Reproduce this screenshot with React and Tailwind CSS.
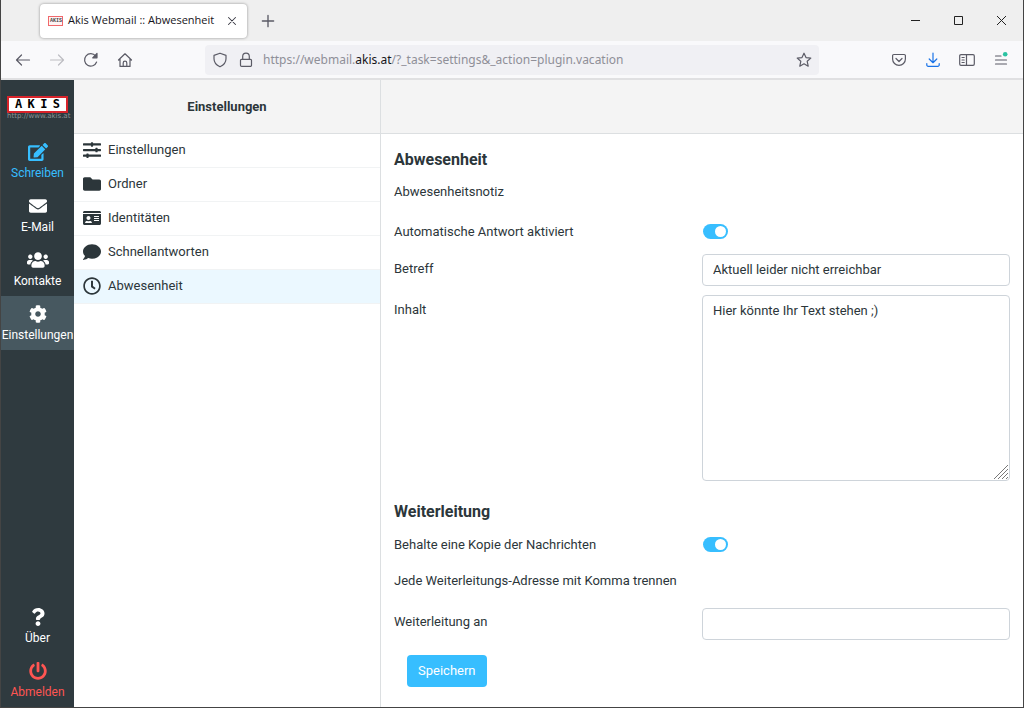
/**
 * Webmail settings page - out-of-office notice and forwarding,
 * shown inside a browser window frame
 */

import React, { useState } from 'react';
import {
  FaEdit,
  FaEnvelope,
  FaUsers,
  FaCog,
  FaQuestion,
  FaPowerOff,
  FaSlidersH,
  FaFolder,
  FaIdCard,
  FaComment,
  FaRegClock,
} from 'react-icons/fa';

const mainTasks = [
  { label: 'Schreiben', icon: FaEdit, size: 20, color: 'text-[#37beff]' },
  { label: 'E-Mail', icon: FaEnvelope, size: 18, color: 'text-white' },
  { label: 'Kontakte', icon: FaUsers, size: 22, color: 'text-white' },
  { label: 'Einstellungen', icon: FaCog, size: 18, color: 'text-white bg-[#475860]' },
];

const footerTasks = [
  { label: 'Über', icon: FaQuestion, size: 18, color: 'text-white' },
  { label: 'Abmelden', icon: FaPowerOff, size: 18, color: 'text-[#ff5552]' },
];

const sections = [
  { label: 'Einstellungen', icon: FaSlidersH },
  { label: 'Ordner', icon: FaFolder },
  { label: 'Identitäten', icon: FaIdCard },
  { label: 'Schnellantworten', icon: FaComment },
  { label: 'Abwesenheit', icon: FaRegClock },
];

// Stroke icon used for all browser buttons
const Glyph = ({ children, size = 16, width = 1.2 }) => (
  <svg
    width={size}
    height={size}
    viewBox="0 0 16 16"
    fill="none"
    stroke="currentColor"
    strokeWidth={width}
    strokeLinecap="round"
    strokeLinejoin="round"
    className="shrink-0"
    aria-hidden="true"
  >
    {children}
  </svg>
);

const ToolButton = ({ label, color = 'text-[#5b5b66]', children }) => (
  <button type="button" aria-label={label} className={`flex h-8 w-[34px] items-center justify-center ${color}`}>
    <Glyph>{children}</Glyph>
  </button>
);

const CaptionButton = ({ label, children }) => (
  <button type="button" aria-label={label} className="flex h-full w-[43px] items-center justify-center text-[#222222]">
    <svg width="11" height="11" viewBox="0 0 11 11" fill="none" stroke="currentColor" aria-hidden="true">
      {children}
    </svg>
  </button>
);

const TabBar = () => (
  <div className="flex h-[41px] items-center bg-[#efefef] pl-[39px]">
    <div className="flex h-[34px] w-[207px] items-center rounded bg-white px-2 shadow-[0_0_3px_rgba(0,0,0,0.4)]">
      <span className="flex w-[15px] shrink-0 justify-between border border-[#f0686c] bg-[#fff4f4] px-px font-['Liberation_Mono',monospace] text-[5px] leading-[8px] font-bold text-[#444444]">
        <span>A</span>
        <span>K</span>
        <span>I</span>
        <span>S</span>
      </span>
      <span className="ml-[5px] flex-1 font-['Open_Sans','Noto_Sans',sans-serif] text-[11px] whitespace-nowrap text-[#15141a]">
        Akis Webmail :: Abwesenheit
      </span>
      <button type="button" aria-label="Tab schließen" className="text-[#3a3a44]">
        <Glyph size={14}>
          <path d="M4 4l8 8M12 4l-8 8" />
        </Glyph>
      </button>
    </div>
    <button type="button" aria-label="Neuer Tab" className="ml-3 text-[#5b5b66]">
      <Glyph size={18}>
        <path d="M8 3v10M3 8h10" />
      </Glyph>
    </button>
    <div className="ml-auto flex h-full">
      <CaptionButton label="Minimieren">
        <path d="M1 5.5h9" />
      </CaptionButton>
      <CaptionButton label="Maximieren">
        <path d="M1.5 1.5h8v8h-8z" />
      </CaptionButton>
      <CaptionButton label="Schließen">
        <path d="M1 1l9 9M10 1l-9 9" />
      </CaptionButton>
    </div>
  </div>
);

const Toolbar = () => (
  <div className="flex h-[39px] items-center border-b-2 border-[#e0e0e2] bg-[#f9f9fb] pr-[5px] pl-[5px]">
    <ToolButton label="Zurück">
      <path d="M14.5 8H2M6.5 3L1.5 8l5 5" />
    </ToolButton>
    <ToolButton label="Vor" color="text-[#bdbdc2]">
      <path d="M1.5 8H14M9.5 3l5 5-5 5" />
    </ToolButton>
    <ToolButton label="Neu laden">
      <path d="M13.6 10A6.2 6.2 0 1 1 12.6 4" />
      <path d="M14 1.5v4.3H9.7z" fill="currentColor" />
    </ToolButton>
    <ToolButton label="Startseite">
      <path d="M1.5 8L8 1.8 14.5 8M3 7v7.4h10V7M6.2 14.2V11a1.8 1.8 0 0 1 3.6 0v3.2" />
    </ToolButton>
    <div className="mx-[63px] flex h-[30px] flex-1 items-center rounded bg-[#f0f0f4] px-[7px] text-[#5b5b66]">
      <Glyph>
        <path d="M8 1.2l6 2.2v3.4c0 3.6-2.4 6.4-6 8-3.6-1.6-6-4.4-6-8V3.4z" />
      </Glyph>
      <span className="ml-2.5">
        <Glyph>
          <path d="M3.5 7.3h9a1 1 0 0 1 1 1v4.9a1.2 1.2 0 0 1-1.2 1.2H3.7a1.2 1.2 0 0 1-1.2-1.2V8.3a1 1 0 0 1 1-1zM4.7 7V4.5a3.3 3.3 0 0 1 6.6 0V7" />
        </Glyph>
      </span>
      <span className="ml-[9px] flex-1 font-['Noto_Sans','Open_Sans',sans-serif] text-[12px] whitespace-nowrap text-[#8f8f98]">
        https://webmail.<span className="text-[#15141a]">akis.at</span>/?_task=settings&amp;_action=plugin.vacation
      </span>
      <button type="button" aria-label="Lesezeichen">
        <Glyph>
          <path d="M8 1.2l2 4.4 4.8.5-3.6 3.2 1 4.9L8 11.8l-4.2 2.4 1-4.9L1.2 6.1 6 5.6z" />
        </Glyph>
      </button>
    </div>
    <ToolButton label="Pocket">
      <path d="M2.8 2.5h10.4a1.2 1.2 0 0 1 1.2 1.2V7a6.4 6.4 0 0 1-12.8 0V3.7a1.2 1.2 0 0 1 1.2-1.2zM5 6.5l3 3 3-3" />
    </ToolButton>
    <ToolButton label="Downloads" color="text-[#1a73e8]">
      <path d="M8 1v9.5M4.2 7L8 10.7 11.8 7M1.8 11.5v1.4a1.4 1.4 0 0 0 1.4 1.4h9.6a1.4 1.4 0 0 0 1.4-1.4v-1.4" />
    </ToolButton>
    <ToolButton label="Seitenleiste">
      <path d="M2 2.6h12a1.3 1.3 0 0 1 1.3 1.3v8.2a1.3 1.3 0 0 1-1.3 1.3H2a1.3 1.3 0 0 1-1.3-1.3V3.9A1.3 1.3 0 0 1 2 2.6zM7.5 2.6v10.8M3 5.5h2.2M3 8h2.2M3 10.5h2.2" />
    </ToolButton>
    <ToolButton label="Menü">
      <path d="M2.5 4H8M2.5 8h11M2.5 12h11" />
      <circle cx="12.2" cy="2.3" r="2.3" fill="#2ac3a2" stroke="none" />
    </ToolButton>
  </div>
);

const TaskLink = ({ task }) => {
  const Icon = task.icon;
  return (
    <a href="#" className={`flex h-[54px] flex-col items-center pt-2 ${task.color}`}>
      <span className="flex h-5 items-center">
        <Icon size={task.size} />
      </span>
      <span className="mt-0.5 text-[12px] leading-[18px] whitespace-nowrap">{task.label}</span>
    </a>
  );
};

const TaskMenu = () => (
  <nav className="flex w-[73px] shrink-0 flex-col bg-[#2f3a3f]">
    <div className="h-[54px] px-1.5 pt-4">
      <div className="flex justify-between border-2 border-[#d8232a] bg-white px-1.5 font-['DejaVu_Sans_Mono',monospace] text-[12px] leading-[13px] font-bold text-black">
        <span>A</span>
        <span>K</span>
        <span>I</span>
        <span>S</span>
      </div>
      <div className="text-center font-['DejaVu_Sans',sans-serif] text-[7px] leading-[7px] whitespace-nowrap text-[#8a9295]">
        http://www.akis.at
      </div>
    </div>
    {mainTasks.map((task) => (
      <TaskLink key={task.label} task={task} />
    ))}
    <div className="mt-auto">
      {footerTasks.map((task) => (
        <TaskLink key={task.label} task={task} />
      ))}
    </div>
  </nav>
);

const SectionList = ({ active, onSelect }) => (
  <aside className="flex w-[307px] shrink-0 flex-col border-r border-[#dcdfe1]">
    <h2 className="flex h-[54px] items-center justify-center border-b border-[#dcdfe1] bg-[#f4f4f4] text-[13px] font-bold">
      Einstellungen
    </h2>
    <ul>
      {sections.map(({ label, icon: Icon }) => (
        <li key={label}>
          <button
            type="button"
            onClick={() => onSelect(label)}
            className={`flex w-full items-center gap-1.5 border-b border-[#f1f3f4] pt-[5px] pb-[7px] pl-2 text-[13px] leading-[21px] ${active === label ? 'bg-[#ebf8ff]' : ''}`}
          >
            <span className="flex w-5 justify-center">
              <Icon size={18} />
            </span>
            {label}
          </button>
        </li>
      ))}
    </ul>
  </aside>
);

const Toggle = ({ id, checked, onChange }) => (
  <input
    id={id}
    type="checkbox"
    role="switch"
    checked={checked}
    onChange={onChange}
    className="mt-1 ml-px h-[15px] w-[25px] appearance-none rounded-full bg-[#b8c0c4] before:m-0.5 before:block before:size-[11px] before:rounded-full before:bg-white checked:bg-[#37beff] checked:before:ml-3"
  />
);

const fieldClass = 'block w-full rounded border border-[#ced4da] bg-white px-2.5 text-[13px]';

const VacationForm = () => {
  const [autoReply, setAutoReply] = useState(true);
  const [keepCopy, setKeepCopy] = useState(true);

  return (
    <form className="px-[13px] pt-3.5 text-[13px] leading-6" onSubmit={(e) => e.preventDefault()}>
      <h3 className="text-base leading-6 font-bold">Abwesenheit</h3>
      <p className="mt-2">Abwesenheitsnotiz</p>
      <div className="mt-4 grid grid-cols-2 items-start">
        <label htmlFor="auto-reply">Automatische Antwort aktiviert</label>
        <Toggle id="auto-reply" checked={autoReply} onChange={(e) => setAutoReply(e.target.checked)} />
      </div>
      <div className="mt-2.5 grid grid-cols-2 items-start">
        <label htmlFor="subject" className="pt-[3px]">Betreff</label>
        <input id="subject" type="text" defaultValue="Aktuell leider nicht erreichbar" className={`${fieldClass} h-8 pb-0.5`} />
      </div>
      <div className="mt-[9px] grid grid-cols-2 items-start">
        <label htmlFor="body" className="pt-[3px]">Inhalt</label>
        <div className="relative">
          <textarea
            id="body"
            defaultValue="Hier könnte Ihr Text stehen ;)"
            className={`${fieldClass} h-[186px] resize-none py-1 leading-[21px]`}
          />
          {/* Resize grip */}
          <svg
            width="14"
            height="14"
            viewBox="0 0 14 14"
            stroke="#777777"
            className="pointer-events-none absolute right-0.5 bottom-0.5"
            aria-hidden="true"
          >
            <path d="M0 14L14 0M4 14L14 4M8 14l6-6M12 14l2-2" />
          </svg>
        </div>
      </div>

      <h3 className="mt-[19px] text-base leading-6 font-bold">Weiterleitung</h3>
      <div className="mt-[9px] grid grid-cols-2 items-start">
        <label htmlFor="keep-copy">Behalte eine Kopie der Nachrichten</label>
        <Toggle id="keep-copy" checked={keepCopy} onChange={(e) => setKeepCopy(e.target.checked)} />
      </div>
      <p className="mt-3">Jede Weiterleitungs-Adresse mit Komma trennen</p>
      <div className="mt-[15px] grid grid-cols-2 items-start">
        <label htmlFor="forward" className="pt-0.5">Weiterleitung an</label>
        <input id="forward" type="text" className={`${fieldClass} h-8`} />
      </div>
      <button type="submit" className="mt-[15px] ml-[13px] h-8 rounded-sm bg-[#37beff] px-[11px] text-white">
        Speichern
      </button>
    </form>
  );
};

const App = () => {
  const [active, setActive] = useState('Abwesenheit');

  return (
    <div className="flex min-h-screen flex-col border-x border-b border-[#444444] bg-white font-['Roboto',sans-serif] text-[#2c363a]">
      <TabBar />
      <Toolbar />
      <div className="flex flex-1">
        <TaskMenu />
        <SectionList active={active} onSelect={setActive} />
        <main className="min-w-0 flex-1">
          <div className="h-[54px] border-b border-[#dcdfe1] bg-[#f4f4f4]" />
          <VacationForm />
        </main>
      </div>
    </div>
  );
};

export default App;
